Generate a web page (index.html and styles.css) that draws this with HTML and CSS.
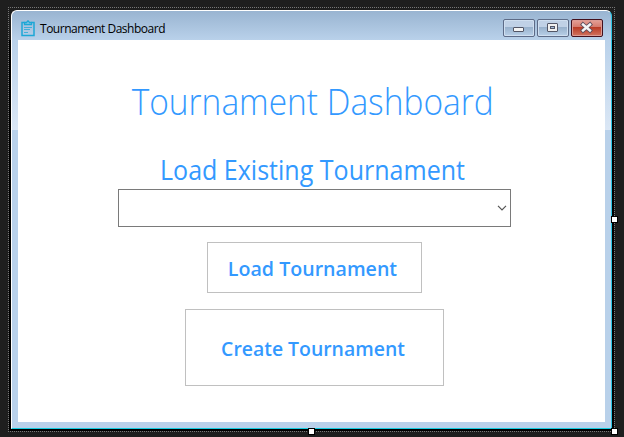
FILE: index.html
```html
<!DOCTYPE html>
<html lang="en">
<head>
<meta charset="utf-8">
<title>Tournament Dashboard</title>
<link rel="stylesheet" href="styles.css">
</head>
<body>
<div class="selection">
  <div class="window">
    <header class="titlebar">
      <svg class="app-icon" width="14" height="17" viewBox="0 0 14 17" fill="none" stroke="#1ca7d6">
        <path d="M3.500 2.500H1v13h12v-13h-2.500" stroke-width="1.500"/>
        <path d="M3.500 4.500v-2h2L7 .8l1.500 1.700h2v2z" fill="#8fc8e6" stroke-width="1.300"/>
        <path d="M3 7.500h8M3 9.500h6M3 12.500h4" stroke-opacity=".75"/>
      </svg>
      <span class="caption">Tournament Dashboard</span>
      <div class="controls">
        <div class="control"><svg width="32" height="18" viewBox="0 0 32 18"><rect x="10.500" y="8.500" width="10" height="4" rx=".5" fill="#f4f4f4" stroke="#535666"/></svg></div>
        <div class="control"><svg width="32" height="18" viewBox="0 0 32 18"><rect x="10.500" y="4.500" width="10" height="8" rx=".5" fill="#f0f0f0" stroke="#535666"/><rect x="13.500" y="7.500" width="4" height="2" fill="#a4bdda" stroke="#535666"/></svg></div>
        <div class="control close"><svg width="32" height="18" viewBox="0 0 32 18"><path d="M12 5.500l7 6M19 5.500l-7 6" stroke="#5c4d5c" stroke-width="4.200" stroke-linecap="square"/><path d="M12 5.500l7 6M19 5.500l-7 6" stroke="#f4f4f4" stroke-width="2.400" stroke-linecap="square"/></svg></div>
      </div>
    </header>
    <main class="client">
      <h1>Tournament Dashboard</h1>
      <h2>Load Existing Tournament</h2>
      <div class="combo"><svg width="10" height="6" viewBox="0 0 10 6"><path d="M1 .8l4 4 4-4" fill="none" stroke="#555" stroke-width="1.200"/></svg></div>
      <button class="load"><span>Load Tournament</span></button>
      <button class="create"><span>Create Tournament</span></button>
    </main>
  </div>
  <i class="handle right"></i>
  <i class="handle bottom"></i>
  <i class="handle corner"></i>
</div>
</body>
</html>
```
FILE: styles.css
```css
* { box-sizing: border-box; }
body {
  margin: 0;
  width: 624px;
  height: 437px;
  overflow: hidden;
  padding: 7px 0 0 8px;
  background: #1e1e1e;
  font-family: "Open Sans", "Noto Sans", sans-serif;
}
.selection {
  position: relative;
  width: 607px;
  height: 425px;
  padding: 3px;
  background:
    repeating-linear-gradient(90deg, #777 0 1px, #1e1e1e 1px 2px) top / 100% 1px no-repeat,
    repeating-linear-gradient(90deg, #777 0 1px, #1e1e1e 1px 2px) bottom / 100% 1px no-repeat,
    repeating-linear-gradient(#777 0 1px, #1e1e1e 1px 2px) left / 1px 100% no-repeat,
    repeating-linear-gradient(#777 0 1px, #1e1e1e 1px 2px) right / 1px 100% no-repeat,
    linear-gradient(#000, #000) 1px 33px / 605px 391px no-repeat,
    #1e1e1e;
}
.window {
  width: 601px;
  height: 419px;
  padding: 0 6px 6px;
  border: 1px solid #fff;
  border-right-color: #2bc4e3;
  border-bottom-color: #14cbe0;
  border-radius: 6px 6px 0 0;
  background:
    linear-gradient(#b9d1ea, #dbe7f5) 0 29px / 100% 90px no-repeat,
    linear-gradient(#99b4d1, #b9d1ea) 0 0 / 100% 29px no-repeat,
    #b9d1ea;
}
.titlebar {
  display: flex;
  height: 29px;
  padding: 8px 2px 0 3px;
}
.app-icon { margin-top: 1px; }
.caption {
  width: 130px;
  margin-left: 5px;
  font-size: 12px;
  line-height: 19px;
  white-space: nowrap;
  letter-spacing: -0.48px;
  color: #000;
}
.controls { display: flex; gap: 2px; margin-left: auto; }
.control {
  width: 32px;
  height: 18px;
  border: 1px solid #5d6b87;
  border-radius: 2px;
  box-shadow: inset 0 0 0 1px #d0dff0;
  background: linear-gradient(#c0d1e6 0 45%, #98b1cc 46%, #b9d0e8);
}
.control svg { display: block; margin: -1px; }
.close {
  border-color: #43101c;
  box-shadow: inset 0 0 0 1px #dc9b94;
  background: linear-gradient(#e5a198, #d4796b 45%, #b93b25 46%, #d17460);
}
.client {
  display: flex;
  flex-direction: column;
  align-items: center;
  height: 382px;
  padding-top: 38px;
  background: #fff;
  color: #3399ff;
}
h1, h2 { margin: 0; white-space: nowrap; }
h1 {
  margin-left: 3px;
  font-size: 36px;
  line-height: 48px;
  font-weight: 300;
  transform: scaleX(.93);
}
h2 {
  margin-top: 26px;
  margin-left: 2px;
  font-size: 27px;
  line-height: 36px;
  font-weight: 400;
  transform: scaleX(.927);
}
.combo {
  display: flex;
  align-items: center;
  justify-content: flex-end;
  width: 393px;
  height: 38px;
  margin-top: 1px;
  margin-left: 6px;
  padding-right: 3px;
  border: 1px solid #7a7a7a;
}
button {
  padding: 2px 4px 0 0;
  border: 1px solid #c0c0c0;
  background: #fff;
  color: #3399ff;
  font: 550 20px/28px "Open Sans", "Noto Sans", sans-serif;
  white-space: nowrap;
}
button span { display: block; transform: scaleX(.98); }
.load { width: 215px; height: 51px; margin: 15px 0 0 6px; }
.create { width: 259px; height: 77px; margin: 16px 0 0 6px; padding-right: 3px; }
.create span { transform: scaleX(.97); }
.handle {
  position: absolute;
  width: 7px;
  height: 7px;
  border: 1px solid #000;
  background: #fff;
}
.right { left: 603px; top: 209px; }
.bottom { left: 300px; top: 421px; }
.corner { left: 603px; top: 421px; }
```
